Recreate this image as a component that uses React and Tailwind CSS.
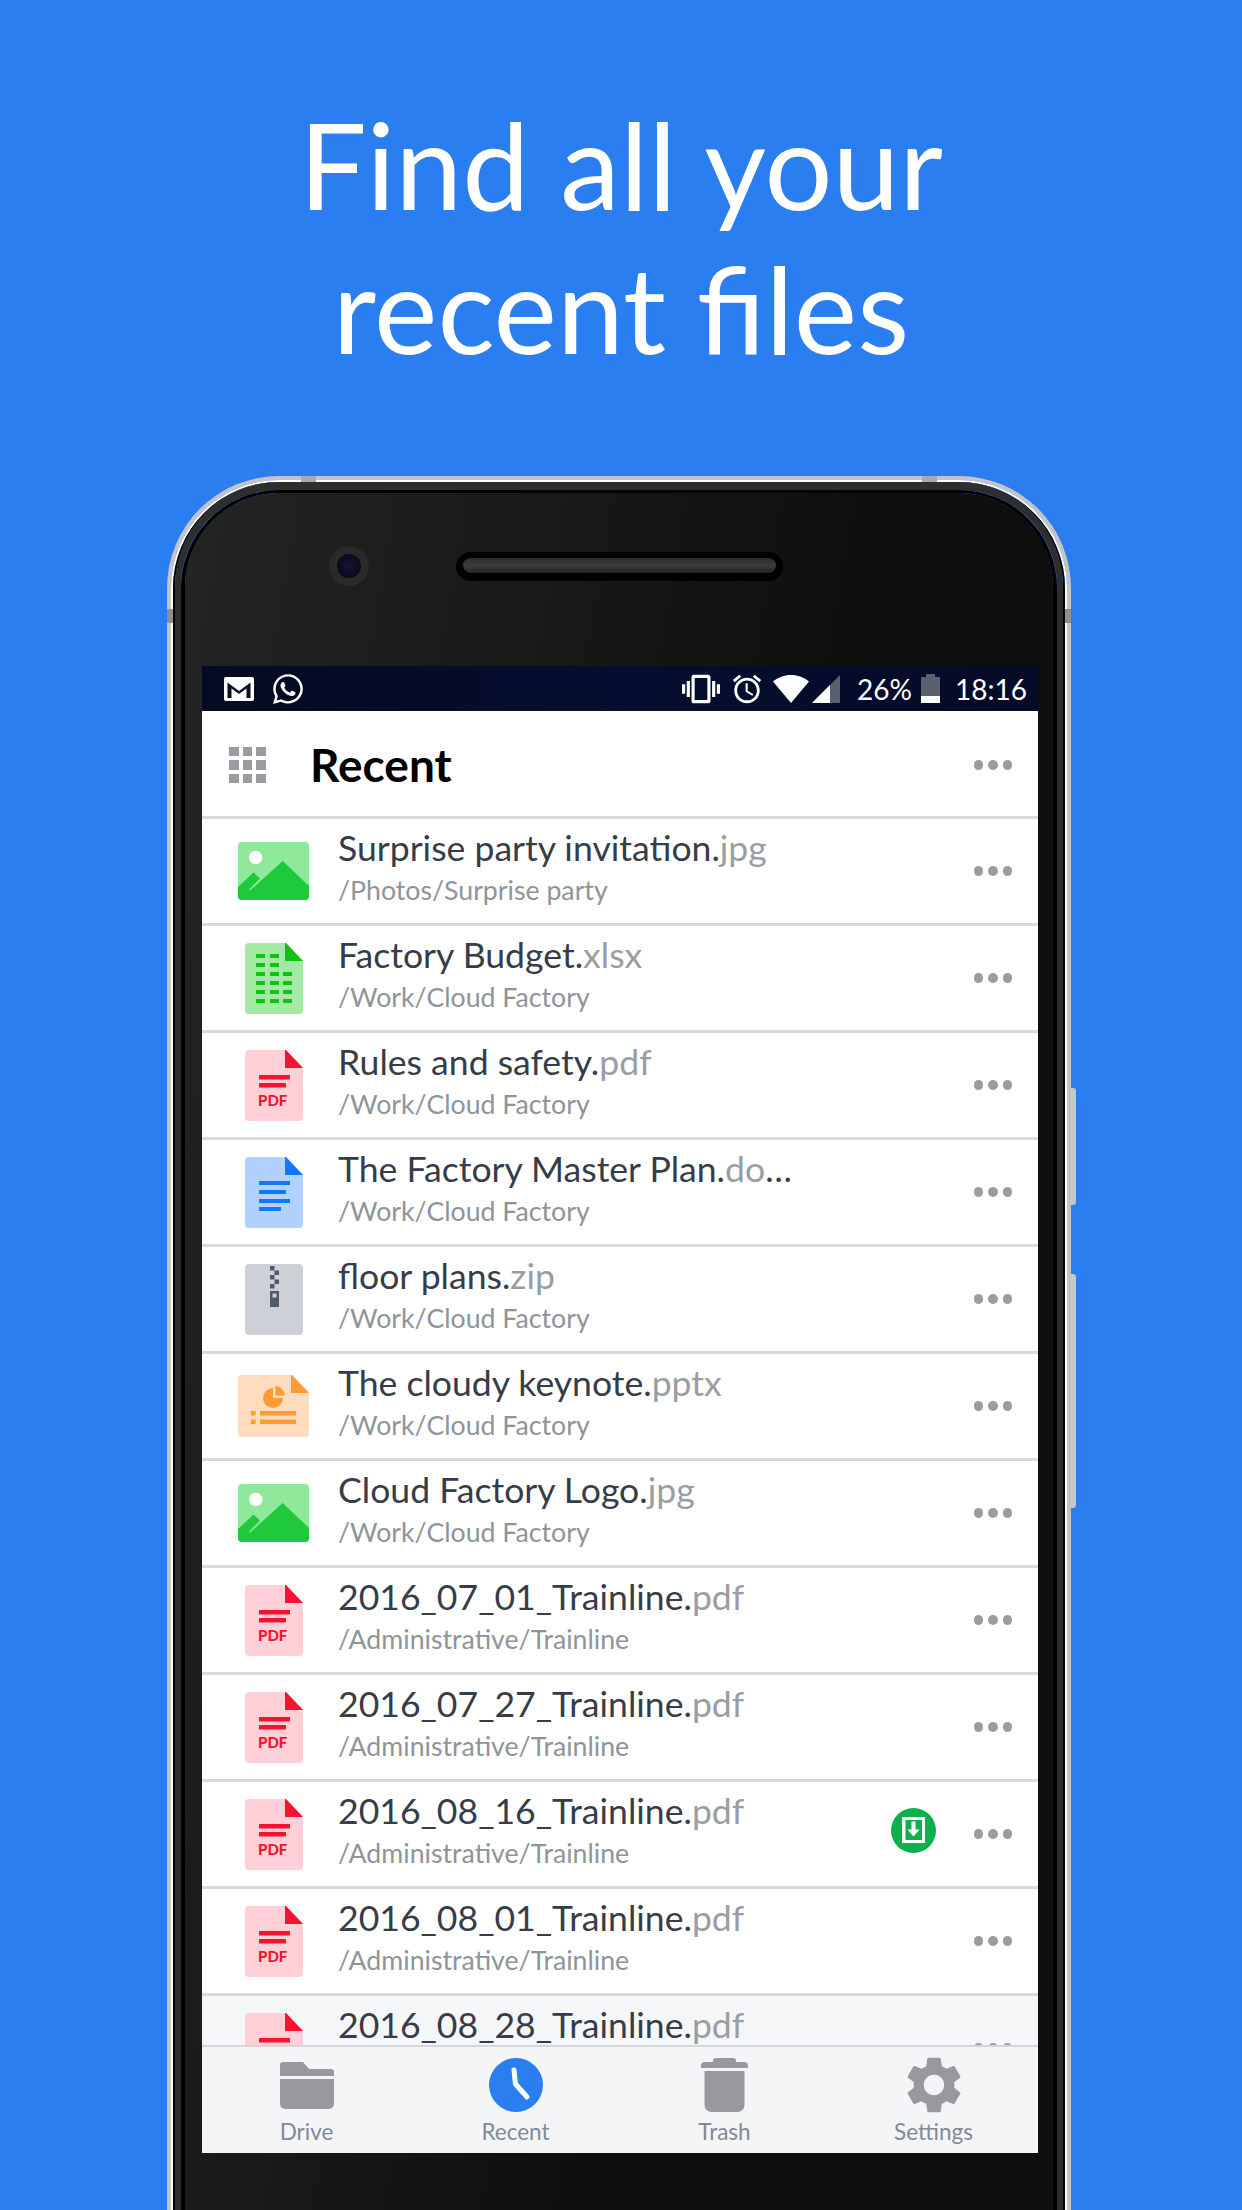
import React from 'react';
import { FaWhatsapp } from 'react-icons/fa';

const FOLD = 'M0 4a4 4 0 0 1 4-4h37l17 18v49a4 4 0 0 1-4 4H4a4 4 0 0 1-4-4z';

const DocBase = ({ bg, fold, children }) => (
  <svg width="58" height="71" viewBox="0 0 58 71">
    <path d={FOLD} fill={bg} />
    <path d="M40 0h1l17 18H40z" fill={fold} />
    {children}
  </svg>
);

const PdfIcon = () => (
  <DocBase bg="#ffd0d8" fold="#f5132f">
    <rect x="14" y="25" width="31" height="4.5" fill="#f5132f" />
    <rect x="14" y="33" width="27" height="4.5" fill="#f5132f" />
    <text x="13" y="56" fontFamily="Lato, sans-serif" fontWeight="900" fontSize="15" fill="#f5132f">PDF</text>
  </DocBase>
);

const XlsIcon = () => {
  const rows = [11, 20, 29, 38, 47, 56];
  return (
    <DocBase bg="#a3e8a3" fold="#12c212">
      {rows.map((y, i) => (
        <g key={y} fill="#12c212">
          <rect x="11" y={y} width="9" height="4" />
          <rect x="25" y={y} width="9" height="4" />
          {i > 1 && <rect x="38" y={y} width="9" height="4" />}
        </g>
      ))}
    </DocBase>
  );
};

const WordIcon = () => (
  <DocBase bg="#b1d2ff" fold="#1477ff">
    <rect x="14" y="24" width="31" height="4" fill="#1477ff" />
    <rect x="14" y="33" width="27" height="4" fill="#1477ff" />
    <rect x="14" y="42" width="31" height="4" fill="#1477ff" />
    <rect x="14" y="50" width="22" height="4" fill="#1477ff" />
  </DocBase>
);

const ZipIcon = () => (
  <svg width="58" height="71" viewBox="0 0 58 71">
    <rect width="58" height="71" rx="4" fill="#cdd0d7" />
    <g fill="#4f5b6b">
      <rect x="25" y="2" width="4.5" height="4.5" />
      <rect x="29.500" y="6.500" width="4.5" height="4.5" />
      <rect x="25" y="11" width="4.5" height="4.5" />
      <rect x="29.500" y="15.500" width="4.5" height="4.5" />
      <rect x="25" y="20" width="4.5" height="4.5" />
      <rect x="25" y="27" width="9" height="16" />
    </g>
    <rect x="27.500" y="29.500" width="4" height="4" fill="#cdd0d7" />
  </svg>
);

const PptIcon = () => (
  <svg width="71" height="62" viewBox="0 0 71 62">
    <path d="M0 4a4 4 0 0 1 4-4h50l17 18v40a4 4 0 0 1-4 4H4a4 4 0 0 1-4-4z" fill="#ffdcbe" />
    <path d="M53 0h1l17 18H53z" fill="#ff9a35" />
    <g fill="#ff9a35">
      <path d="M35 13v10h10a10 10 0 1 1-10-10z" />
      <path d="M37.500 11a10 10 0 0 1 9.500 9.500h-9.500z" />
      <rect x="13" y="36" width="4.5" height="4.5" />
      <rect x="13" y="44.500" width="4.5" height="4.5" />
      <rect x="22" y="36" width="36" height="4.5" />
      <rect x="22" y="44.500" width="36" height="4.5" />
    </g>
  </svg>
);

const ImageIcon = () => (
  <svg width="71" height="58" viewBox="0 0 71 58">
    <rect width="71" height="58" rx="4" fill="#90e89a" />
    <circle cx="17.700" cy="15.500" r="6.700" fill="#fff" />
    <path d="M0 45L15.500 30.500l6.500 6L11 47.500l1 1L44.700 19 71 44v10a4 4 0 0 1-4 4H4a4 4 0 0 1-4-4z" fill="#1fc93c" />
  </svg>
);

const Dots = () => (
  <div className="flex gap-[5px] shrink-0">
    <span className="w-[9.5px] h-[9.5px] rounded-full bg-[#9a9ca1]" />
    <span className="w-[9.5px] h-[9.5px] rounded-full bg-[#9a9ca1]" />
    <span className="w-[9.5px] h-[9.5px] rounded-full bg-[#9a9ca1]" />
  </div>
);

const OfflineBadge = () => (
  <svg width="45" height="45" viewBox="0 0 45 45" className="shrink-0 mb-[8px]">
    <circle cx="22.500" cy="22.500" r="22.500" fill="#0db14b" />
    <rect x="11" y="9" width="23" height="26" fill="#fff" />
    <rect x="14.500" y="12" width="16.500" height="20" fill="#0db14b" />
    <path d="M20.500 13.500h4v8h4l-6 7-6-7h4z" fill="#fff" />
  </svg>
);

const files = [
  { name: 'Surprise party invitation.', ext: 'jpg', path: '/Photos/Surprise party', icon: ImageIcon },
  { name: 'Factory Budget.', ext: 'xlsx', path: '/Work/Cloud Factory', icon: XlsIcon },
  { name: 'Rules and safety.', ext: 'pdf', path: '/Work/Cloud Factory', icon: PdfIcon },
  { name: 'The Factory Master Plan.', ext: 'docx', path: '/Work/Cloud Factory', icon: WordIcon },
  { name: 'floor plans.', ext: 'zip', path: '/Work/Cloud Factory', icon: ZipIcon },
  { name: 'The cloudy keynote.', ext: 'pptx', path: '/Work/Cloud Factory', icon: PptIcon },
  { name: 'Cloud Factory Logo.', ext: 'jpg', path: '/Work/Cloud Factory', icon: ImageIcon },
  { name: '2016_07_01_Trainline.', ext: 'pdf', path: '/Administrative/Trainline', icon: PdfIcon },
  { name: '2016_07_27_Trainline.', ext: 'pdf', path: '/Administrative/Trainline', icon: PdfIcon },
  { name: '2016_08_16_Trainline.', ext: 'pdf', path: '/Administrative/Trainline', icon: PdfIcon, offline: true },
  { name: '2016_08_01_Trainline.', ext: 'pdf', path: '/Administrative/Trainline', icon: PdfIcon },
  { name: '2016_08_28_Trainline.', ext: 'pdf', path: '/Administrative/Trainline', icon: PdfIcon, pressed: true },
];

const FileRow = ({ file }) => {
  const Icon = file.icon;
  return (
    <div
      className={`h-[107px] shrink-0 flex items-center pl-[36px] pr-[26px] border-b-[3px] border-[#d9dadd] ${
        file.pressed ? 'bg-[#f5f6f8]' : 'bg-white'
      }`}
    >
      <div className="w-[71px] flex justify-center shrink-0">
        <Icon />
      </div>
      <div className="ml-[29px] flex-1 min-w-0 pb-[8px]">
        <div className="w-[458px] truncate text-[35.6px] leading-[44px] text-[#363c48]">
          {file.name}
          <span className="text-[#9a9ea3]">{file.ext}</span>
        </div>
        <div className="mt-[2px] text-[26.7px] leading-[36px] text-[#8f9499]">{file.path}</div>
      </div>
      {file.offline && <OfflineBadge />}
      <div className={file.offline ? 'ml-[38px]' : ''}>
        <Dots />
      </div>
    </div>
  );
};

const StatusBar = () => (
  <div className="h-[45px] flex items-center pl-[22px] pr-[11px] text-white bg-[linear-gradient(90deg,#050a20,#050e30_50%,#050a26)]">
    <svg width="30" height="24" viewBox="0 0 30 24">
      <rect width="30" height="24" rx="2" fill="#fff" />
      <path d="M3.500 21V5.500L15 14 26.500 5.500V21h-4V11.500L15 17 7.500 11.500V21z" fill="#06102c" />
    </svg>
    <FaWhatsapp className="w-[34px] h-[34px] ml-[17px]" />
    <div className="flex-1" />
    <svg width="38" height="38" viewBox="0 0 24 24" fill="#fff">
      <path d="M0 15h2V9H0v6zm3 2h2V7H3v10zm19-8v6h2V9h-2zm-3 8h2V7h-2v10zM16.500 3h-9C6.670 3 6 3.670 6 4.500v15c0 .83.670 1.500 1.500 1.500h9c.83 0 1.500-.67 1.500-1.500v-15c0-.83-.67-1.500-1.500-1.500zM16 19H8V5h8v14z" />
    </svg>
    <svg width="34" height="34" viewBox="0 0 24 24" fill="#fff" className="ml-[10px]">
      <path d="M22 5.720l-4.600-3.860-1.290 1.530 4.600 3.860L22 5.720zM7.880 3.390L6.600 1.860 2 5.710l1.290 1.530 4.590-3.850zM12.500 8H11v6l4.750 2.850.75-1.230-4-2.370V8zM12 4c-4.970 0-9 4.030-9 9s4.020 9 9 9c4.970 0 9-4.030 9-9s-4.030-9-9-9zm0 16c-3.870 0-7-3.130-7-7s3.130-7 7-7 7 3.130 7 7-3.130 7-7 7z" />
    </svg>
    <svg width="36" height="28" viewBox="0 0 36 28" fill="#fff" className="ml-[9px]">
      <path d="M0 6.500C5 2.500 11 0 18 0s13 2.500 18 6.500L18 28z" />
    </svg>
    <svg width="28" height="28" viewBox="0 0 28 28" className="ml-[3px]">
      <path d="M0 28L28 0v28z" fill="#5a6070" />
      <path d="M0 28L18 10v18z" fill="#fff" />
    </svg>
    <span className="ml-[17px] text-[28px] leading-none">26%</span>
    <svg width="19" height="29" viewBox="0 0 19 29" className="ml-[9px]">
      <path d="M0 3h5V0h9v3h5v26H0z" fill="#5a6070" />
      <rect y="22" width="19" height="7" fill="#fff" />
    </svg>
    <span className="ml-[15px] text-[28px] leading-none">18:16</span>
  </div>
);

const FolderIcon = () => (
  <svg width="54" height="47" viewBox="0 0 54 47" fill="#98999e">
    <path d="M0 3a3 3 0 0 1 3-3h20l6 7h22a3 3 0 0 1 3 3v4H0z" />
    <path d="M0 17h54v25a5 5 0 0 1-5 5H5a5 5 0 0 1-5-5z" />
  </svg>
);

const ClockIcon = () => (
  <svg width="54" height="54" viewBox="0 0 54 54">
    <circle cx="27" cy="27" r="27" fill="#2a7ef0" />
    <path d="M25 12l1.500 14L38 39" fill="none" stroke="#fff" strokeWidth="5" strokeLinecap="round" strokeLinejoin="round" />
  </svg>
);

const TrashIcon = () => (
  <svg width="47" height="54" viewBox="0 0 47 54" fill="#98999e">
    <path d="M12 3a3 3 0 0 1 3-3h17a3 3 0 0 1 3 3v1h8a4 4 0 0 1 4 4v2H0V8a4 4 0 0 1 4-4h8z" />
    <path d="M3.500 13h40v34a7 7 0 0 1-7 7h-26a7 7 0 0 1-7-7z" />
  </svg>
);

const GearIcon = () => (
  <svg width="68" height="68" viewBox="0 0 24 24" fill="#98999e" className="-my-[7px]">
    <path d="M19.140 12.940c.04-.3.06-.61.06-.94 0-.32-.02-.64-.07-.94l2.030-1.580c.18-.14.23-.41.12-.61l-1.920-3.320c-.12-.22-.37-.29-.59-.22l-2.390.96c-.5-.38-1.030-.7-1.620-.94l-.36-2.540c-.04-.24-.24-.41-.48-.41h-3.840c-.24 0-.43.17-.47.41l-.36 2.540c-.59.24-1.130.57-1.620.94l-2.390-.96c-.22-.08-.47 0-.59.22L2.740 8.870c-.12.21-.08.47.12.61l2.030 1.580c-.05.3-.09.63-.09.94s.02.64.07.94l-2.030 1.580c-.18.14-.23.41-.12.61l1.920 3.320c.12.22.37.29.59.22l2.390-.96c.5.38 1.030.7 1.620.94l.36 2.540c.05.24.24.41.48.41h3.840c.24 0 .44-.17.47-.41l.36-2.540c.59-.24 1.130-.56 1.620-.94l2.390.96c.22.08.47 0 .59-.22l1.920-3.320c.12-.22.07-.47-.12-.61l-2.010-1.580zM12 15.600c-1.980 0-3.600-1.620-3.600-3.600s1.620-3.600 3.600-3.600 3.600 1.620 3.600 3.600-1.620 3.600-3.600 3.600z" />
  </svg>
);

const tabs = [
  { label: 'Drive', icon: FolderIcon },
  { label: 'Recent', icon: ClockIcon },
  { label: 'Trash', icon: TrashIcon },
  { label: 'Settings', icon: GearIcon },
];

const TabBar = () => (
  <div className="h-[108px] shrink-0 grid grid-cols-4 bg-[#f4f5f7] border-t-2 border-[#d5d6da]">
    {tabs.map(({ label, icon: Icon }) => (
      <div key={label} className="flex flex-col items-center pt-[11px]">
        <div className="h-[54px] flex items-center">
          <Icon />
        </div>
        <span className="mt-[6px] text-[22.5px] leading-[28px] text-[#7f8a9a]">{label}</span>
      </div>
    ))}
  </div>
);

export default function App() {
  return (
    <div className="relative w-[1242px] h-[2210px] overflow-hidden bg-[#2a7ef0] font-['Lato',sans-serif]">
      <div className="h-[476px] pt-[92px] text-center text-white text-[120px] leading-[144px]">
        Find all your
        <br />
        recent files
      </div>

      {/* Phone frame */}
      <div className="relative ml-[167px] w-[904px] h-[1800px]">
        <div className="absolute left-[134px] top-0 w-[15px] h-[6px] bg-[#a9a9a9] z-10" />
        <div className="absolute right-[134px] top-0 w-[15px] h-[6px] bg-[#a9a9a9] z-10" />
        <div className="absolute left-0 top-[133px] w-[6px] h-[14px] bg-[#8f8f8f] z-10" />
        <div className="absolute right-0 top-[133px] w-[6px] h-[14px] bg-[#8f8f8f] z-10" />
        <div className="absolute -right-[5px] top-[612px] w-[5px] h-[117px] rounded-r-[3px] bg-[#c8c8c8]" />
        <div className="absolute -right-[5px] top-[798px] w-[5px] h-[234px] rounded-r-[3px] bg-[#c8c8c8]" />

        <div className="h-full rounded-t-[112px] border-x-[4px] border-t-[4px] border-[#c4c4c4]">
          <div className="h-full rounded-t-[108px] border-t-[2px] border-x-[2px] border-white">
            <div className="h-full rounded-t-[106px] border-x-[2px] border-black">
              <div className="h-full rounded-t-[104px] border-t-[8px] border-x-[6px] border-[#2e2e2e]">
                <div className="h-full rounded-t-[98px] border-t-[3px] border-x-[4px] border-black">
                  <div className="h-full rounded-t-[94px] pl-[17px] pr-[15px] bg-[linear-gradient(100deg,#242424,#0e0e0e_60%)]">
                    <div className="h-[173px] pt-[53px] flex items-start">
                      <div className="ml-[127px] w-[40px] h-[40px] rounded-full bg-[#2a2a2a] flex items-center justify-center">
                        <div className="w-[24px] h-[24px] rounded-full bg-[radial-gradient(circle,#15143a,#050510)]" />
                      </div>
                      <div className="ml-[87px] mt-[6px] w-[327px] h-[29px] rounded-full bg-black px-[7px] pt-[6px]">
                        <div className="h-[15px] rounded-full bg-[linear-gradient(180deg,#2a2a2a,#3d3d3d_50%,#222)]" />
                      </div>
                    </div>

                    {/* Screen */}
                    <div className="w-[836px] h-[1487px] flex flex-col">
                      <StatusBar />
                      <div className="h-[108px] shrink-0 flex items-center bg-white pl-[27px] pr-[26px] pt-[3px] border-b-[3px] border-[#d9dadd]">
                        <div className="grid grid-cols-3 gap-[4px] w-[37px]">
                          {[0, 1, 2, 3, 4, 5, 6, 7, 8].map((i) => (
                            <span key={i} className="h-[9.5px] bg-[#9a9ca1]" />
                          ))}
                        </div>
                        <h1 className="ml-[44px] flex-1 text-[46px] leading-none font-bold text-black">Recent</h1>
                        <Dots />
                      </div>
                      <div className="flex-1 min-h-0 overflow-hidden flex flex-col">
                        {files.map((file) => (
                          <FileRow key={file.name} file={file} />
                        ))}
                      </div>
                      <TabBar />
                    </div>
                  </div>
                </div>
              </div>
            </div>
          </div>
        </div>
      </div>
    </div>
  );
}
